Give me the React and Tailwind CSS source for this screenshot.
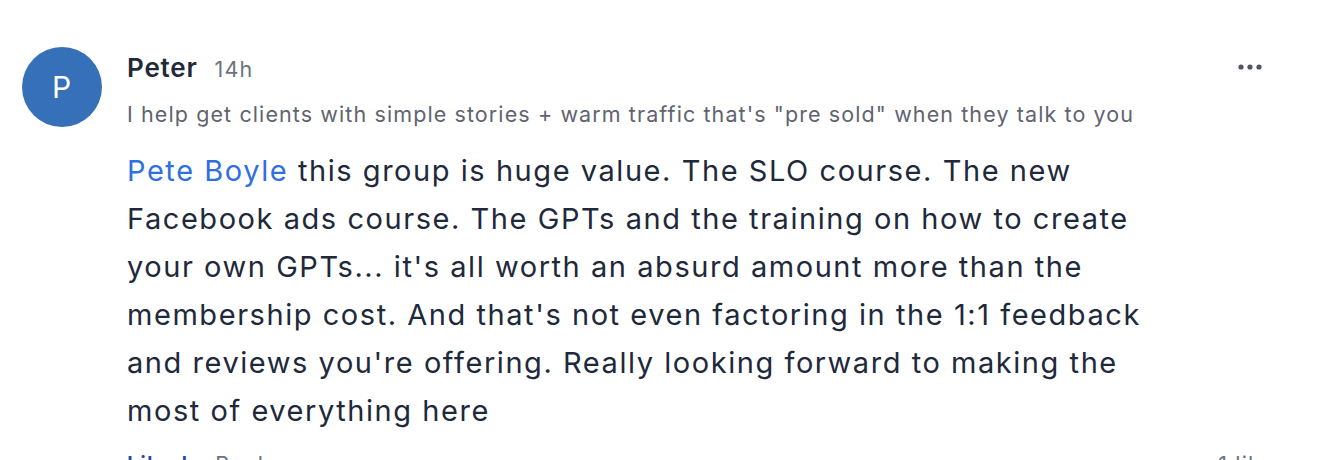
import { useState } from 'react'

function Dots() {
  return (
    <svg width="26" height="6" viewBox="0 0 26 6" className="text-[#4b5563]">
      <circle cx="3" cy="3" r="2.6" fill="currentColor" />
      <circle cx="12" cy="3" r="2.6" fill="currentColor" />
      <circle cx="21" cy="3" r="2.6" fill="currentColor" />
    </svg>
  )
}

export default function App() {
  const [liked, setLiked] = useState(false)

  return (
    <div className="w-[1324px] h-[460px] overflow-hidden bg-white font-['Inter',sans-serif]">
      <div className="flex gap-[25px] pl-[22px] pr-[58px] pt-[47px]">
        {/* Avatar */}
        <div className="w-20 h-20 shrink-0 rounded-full bg-[#3570b9] flex items-center justify-center">
          <span className="text-white text-[30px] leading-none tracking-[1px]">P</span>
        </div>

        <div className="flex-1 min-w-0">
          {/* Header */}
          <div className="flex items-center justify-between mt-[4px] h-[32px]">
            <div className="flex items-baseline gap-[17px]">
              <span className="text-[26px] font-semibold text-[#1f2937] tracking-[0.8px]">Peter</span>
              <span className="text-[21.5px] text-[#6b7280] tracking-[1.2px]">14h</span>
            </div>
            <button className="flex items-center h-8 px-1 -mr-[2px]">
              <Dots />
            </button>
          </div>

          <p className="mt-[17px] text-[21.5px] leading-[28px] text-[#5f6470] tracking-[1.1px]">
            I help get clients with simple stories + warm traffic that's "pre sold" when they talk to you
          </p>

          {/* Body */}
          <p className="mt-[19px] max-w-[1050px] text-[29px] leading-[48px] text-[#1e293b] tracking-[1.55px]">
            <span className="text-[#2f6fe0]">Pete Boyle</span> this group is huge value. The SLO course. The new
            Facebook ads course. The GPTs and the training on how to create your own GPTs... it's all worth an
            absurd amount more than the membership cost. And that's not even factoring in the 1:1 feedback and
            reviews you're offering. Really looking forward to making the most of everything here
          </p>

          {/* Actions */}
          <div className="flex items-center justify-between mt-[15px] text-[21.5px] leading-[28px] tracking-[1.1px]">
            <div className="flex gap-[27px]">
              <button onClick={() => setLiked(!liked)} className="font-semibold text-[#1e4fa3]">Liked</button>
              <button className="text-[#6b7280]">Reply</button>
            </div>
            <span className="text-[#6b7280] -mr-[8px]">1 like</span>
          </div>
        </div>
      </div>
    </div>
  )
}
